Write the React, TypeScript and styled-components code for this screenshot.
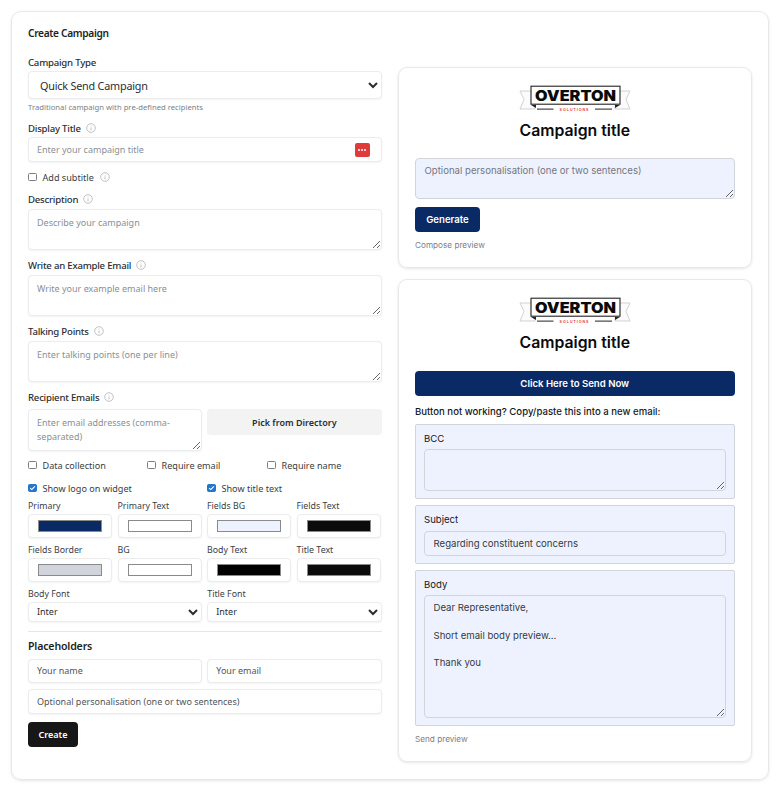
import React from 'react';
import styled, { createGlobalStyle } from 'styled-components';

const GlobalStyle = createGlobalStyle`
  html, body {
    margin: 0;
    padding: 0;
    background: #ffffff;
  }
  * {
    box-sizing: border-box;
  }
  body {
    font-family: 'Noto Sans', sans-serif;
    color: #1f2328;
  }
`;

const Page = styled.div`
  width: 781px;
  height: 788px;
  padding: 11px 12px 8px 11px;
`;

const Shell = styled.main`
  height: 769px;
  border: 1px solid #e8e8e8;
  border-radius: 10px;
  box-shadow: 0 1px 3px rgba(0, 0, 0, 0.1);
  padding: 14px 16px 16px;
  display: grid;
  grid-template-columns: 353.5px 353.5px;
  column-gap: 16.5px;
`;

const FormColumn = styled.form`
  display: flex;
  flex-direction: column;
`;

const PreviewColumn = styled.div`
  display: flex;
  flex-direction: column;
  gap: 11px;
  padding-top: 40.5px;
  font-family: Inter, sans-serif;
`;

const Heading = styled.h1`
  margin: 0 0 15px;
  font-size: 10.2px;
  letter-spacing: -0.33px;
  line-height: 14px;
  font-weight: 600;
  color: #1c1f23;
`;

const Label = styled.label<{ $gap?: number; $top?: number }>`
  display: flex;
  align-items: center;
  gap: 5px;
  height: 14px;
  margin-top: ${(p) => p.$top ?? 0}px;
  margin-bottom: ${(p) => p.$gap ?? 2}px;
  font-size: 9.6px;
  letter-spacing: -0.22px;
  font-weight: 500;
  color: #2a2e33;
`;

const Info = () => (
  <svg width="10" height="10" viewBox="0 0 10 10" fill="none" stroke="#a3a8ae" strokeWidth="0.7">
    <circle cx="5" cy="5" r="4.3" />
    <path d="M5 4.4V7.4M5 2.6V3.3" />
  </svg>
);

const BaseSelect = styled.select`
  width: 100%;
  background: #fff;
  border: 1px solid #ececec;
  border-radius: 4px;
  box-shadow: 0 1px 2px rgba(0, 0, 0, 0.05);
  color: #2a2e33;
  font-family: 'Noto Sans', sans-serif;
  outline: none;
`;

const TypeSelect = styled(BaseSelect)`
  height: 28px;
  padding: 0 0 0 7px;
  font-size: 10.8px;
  letter-spacing: -0.2px;
`;

const SmallSelect = styled(BaseSelect)`
  height: 19.5px;
  padding: 0 0 0 4px;
  font-size: 9px;
`;

const Hint = styled.p`
  margin: 3px 0 8px;
  font-size: 7.7px;
  line-height: 11px;
  color: #7a7f85;
`;

const fieldStyles = `
  width: 100%;
  display: block;
  background: #fff;
  border: 1px solid #ececec;
  border-radius: 4px;
  box-shadow: 0 1px 2px rgba(0, 0, 0, 0.05);
  padding: 0 8px;
  font-family: 'Noto Sans', sans-serif;
  font-size: 9px;
  color: #50555b;
  outline: none;
  &::placeholder {
    color: #8a8f95;
    opacity: 1;
  }
`;

const TextInput = styled.input<{ $h?: number }>`
  ${fieldStyles}
  height: ${(p) => p.$h ?? 25}px;
`;

const TextArea = styled.textarea<{ $h?: number }>`
  ${fieldStyles}
  height: ${(p) => p.$h ?? 41}px;
  padding: 6px 8px;
  line-height: 13.5px;
  resize: vertical;
`;

const InputWrap = styled.div<{ $top?: number }>`
  position: relative;
  margin-top: ${(p) => p.$top ?? 0}px;
`;

const PasswordBadge = styled.span`
  position: absolute;
  top: 6px;
  right: 12px;
  width: 15px;
  height: 14px;
  border-radius: 2px;
  background: #e03a3a;
  display: flex;
  align-items: center;
  justify-content: center;
  gap: 1px;
`;

const BadgeDot = styled.i`
  width: 2px;
  height: 2px;
  border-radius: 50%;
  background: #fff;
`;

const CheckLabel = styled.label<{ $top?: number; $bottom?: number }>`
  display: flex;
  align-items: center;
  gap: 6px;
  height: 14px;
  font-size: 9.1px;
  color: #3a3e43;
  margin-top: ${(p) => p.$top ?? 0}px;
  margin-bottom: ${(p) => p.$bottom ?? 0}px;
`;

const Check = styled.input.attrs({ type: 'checkbox' })`
  appearance: none;
  flex: none;
  width: 8.5px;
  height: 8.5px;
  margin: 0;
  background: #fff;
  border: 1px solid #7d7d7d;
  border-radius: 1.5px;
  &:checked {
    border-color: #2277cc;
    background: #2277cc url("data:image/svg+xml,%3Csvg xmlns='http://www.w3.org/2000/svg' viewBox='0 0 8 8'%3E%3Cpath d='M1.3 4.2 3.2 6 6.7 1.9' fill='none' stroke='white' stroke-width='1.3'/%3E%3C/svg%3E") center/100% no-repeat;
  }
`;

const Columns = styled.div<{ $top?: number }>`
  display: grid;
  grid-template-columns: 174.25px 174.25px;
  column-gap: 5px;
  align-items: start;
  margin-top: ${(p) => p.$top ?? 0}px;
`;

const DirectoryButton = styled.button`
  height: 26px;
  border: none;
  border-radius: 4px;
  background: #f3f3f3;
  color: #2a2e33;
  font-family: 'Noto Sans', sans-serif;
  font-size: 9px;
  font-weight: 600;
`;

const OptionRow = styled.div<{ $cols: string; $top: number }>`
  display: grid;
  grid-template-columns: ${(p) => p.$cols};
  margin-top: ${(p) => p.$top}px;
`;

const SwatchGrid = styled.div`
  display: grid;
  grid-template-columns: repeat(4, 84.25px);
  column-gap: 5.25px;
  row-gap: 6px;
  margin-top: 5px;
`;

const SwatchField = styled.div`
  display: flex;
  flex-direction: column;
  gap: 1px;
`;

const SwatchLabel = styled.span`
  height: 13px;
  font-size: 8.8px;
  line-height: 13px;
  color: #3a3e43;
`;

const SwatchBox = styled.div`
  height: 24px;
  background: #fff;
  border: 1px solid #ececec;
  border-radius: 4px;
  box-shadow: 0 1px 2px rgba(0, 0, 0, 0.05);
  display: flex;
  align-items: center;
  justify-content: center;
`;

const Swatch = styled.div<{ $color: string }>`
  width: 64px;
  height: 12px;
  background: ${(p) => p.$color};
  border: 1px solid #8a8a8a;
`;

const Rule = styled.hr`
  border: none;
  border-top: 1px solid #e6e6e6;
  margin: 9px 0 7px;
`;

const SubHeading = styled.h2`
  margin: 0 0 6px;
  font-size: 10.6px;
  letter-spacing: -0.17px;
  line-height: 14px;
  font-weight: 600;
  color: #1c1f23;
`;

const CreateButton = styled.button`
  width: 50px;
  height: 25px;
  margin-top: 8px;
  border: none;
  border-radius: 4px;
  background: #171717;
  color: #fff;
  font-family: 'Noto Sans', sans-serif;
  font-size: 9px;
  font-weight: 600;
`;

const PreviewCard = styled.section<{ $h: number }>`
  height: ${(p) => p.$h}px;
  border: 1px solid #e8e8e8;
  border-radius: 9px;
  box-shadow: 0 1px 3px rgba(0, 0, 0, 0.1);
  padding: 16px 16px 0;
  display: flex;
  flex-direction: column;
`;

const LogoRow = styled.div`
  display: flex;
  justify-content: center;
  height: 28px;
`;

const CampaignTitle = styled.h2`
  margin: 9px 0 17.5px;
  text-align: center;
  font-size: 15.8px;
  line-height: 20px;
  font-weight: 600;
  color: #0b0b0b;
`;

const PreviewArea = styled.textarea<{ $h: number }>`
  display: block;
  width: 100%;
  height: ${(p) => p.$h}px;
  background: #eef2ff;
  border: 1px solid #d1d5db;
  border-radius: 4px;
  padding: 5px 8.5px;
  font-family: Inter, sans-serif;
  font-size: 9.6px;
  line-height: 13.75px;
  color: #333a44;
  outline: none;
  resize: vertical;
  &::placeholder {
    color: #73777f;
    opacity: 1;
  }
`;

const PreviewInput = styled.input`
  display: block;
  width: 100%;
  height: 25px;
  background: #eef2ff;
  border: 1px solid #d1d5db;
  border-radius: 4px;
  padding: 0 8.5px;
  font-family: Inter, sans-serif;
  font-size: 9.6px;
  color: #333a44;
  outline: none;
`;

const PrimaryButton = styled.button<{ $wide?: boolean }>`
  width: ${(p) => (p.$wide ? '100%' : '65px')};
  height: 25px;
  border: none;
  border-radius: 4px;
  background: #0a2a66;
  color: #fff;
  font-family: Inter, sans-serif;
  font-size: 9.6px;
  font-weight: 600;
`;

const GenerateButton = styled(PrimaryButton)`
  margin-top: 8px;
`;

const Caption = styled.p`
  margin: 8px 0 0;
  font-size: 8.2px;
  line-height: 11px;
  color: #7c8086;
`;

const CopyNote = styled.p`
  margin: 9px 0 6px;
  font-size: 9.6px;
  line-height: 13px;
  font-weight: 500;
  color: #16181b;
`;

const CopyStack = styled.div`
  display: flex;
  flex-direction: column;
  gap: 6px;
`;

const CopyBlock = styled.div`
  background: #eef2ff;
  border: 1px solid #d1d5db;
  border-radius: 2px;
  padding: 7px 8px;
`;

const CopyLabel = styled.div`
  height: 13px;
  margin-bottom: 4.5px;
  font-size: 9.6px;
  line-height: 13px;
  color: #16181b;
`;

const Logo = () => (
  <svg width="112" height="28" viewBox="0 0 112 28">
    <path d="M14 7H1L5 15.5L1 25H16V21Z" fill="#fbfbfb" stroke="#c8c8c8" strokeWidth="0.8" />
    <path d="M98 7H111L107 15.5L111 25H96V21Z" fill="#fbfbfb" stroke="#c8c8c8" strokeWidth="0.8" />
    <path d="M12 21H17V24Z" fill="#222" />
    <path d="M101 21H96V24Z" fill="#222" />
    <rect x="12" y="2.2" width="89" height="18" fill="#fff" stroke="#222" strokeWidth="1.1" />
    <text
      x="56.5"
      y="16.6"
      textAnchor="middle"
      fontFamily="Inter, sans-serif"
      fontWeight="900"
      fontSize="14"
      fill="#0b0b0b"
      textLength="81"
      lengthAdjust="spacingAndGlyphs"
    >
      OVERTON
    </text>
    <rect x="18" y="24.6" width="16.5" height="1" fill="#222" />
    <rect x="76" y="24.6" width="17" height="1" fill="#222" />
    <text
      x="55.5"
      y="26.8"
      textAnchor="middle"
      fontFamily="'Liberation Sans', sans-serif"
      fontWeight="700"
      fontSize="3.6"
      letterSpacing="1"
      fill="#e03a3a"
    >
      SOLUTIONS
    </text>
  </svg>
);

const swatches = [
  { label: 'Primary', color: '#0a2a66' },
  { label: 'Primary Text', color: '#ffffff' },
  { label: 'Fields BG', color: '#eef2ff' },
  { label: 'Fields Text', color: '#0b0b0b' },
  { label: 'Fields Border', color: '#d1d5db' },
  { label: 'BG', color: '#ffffff' },
  { label: 'Body Text', color: '#000000' },
  { label: 'Title Text', color: '#0b0b0b' },
];

export default function App() {
  return (
    <Page>
      <GlobalStyle />
      <Shell>
        <FormColumn>
          <Heading>Create Campaign</Heading>

          <Label>Campaign Type</Label>
          <TypeSelect defaultValue="quick">
            <option value="quick">Quick Send Campaign</option>
          </TypeSelect>
          <Hint>Traditional campaign with pre-defined recipients</Hint>

          <Label>
            Display Title <Info />
          </Label>
          <InputWrap>
            <TextInput placeholder="Enter your campaign title" />
            <PasswordBadge>
              <BadgeDot />
              <BadgeDot />
              <BadgeDot />
            </PasswordBadge>
          </InputWrap>

          <CheckLabel $top={8} $bottom={8}>
            <Check />
            Add subtitle <Info />
          </CheckLabel>

          <Label $gap={3}>
            Description <Info />
          </Label>
          <TextArea placeholder="Describe your campaign" />

          <Label $top={8} $gap={3}>
            Write an Example Email <Info />
          </Label>
          <TextArea placeholder="Write your example email here" />

          <Label $top={8} $gap={3}>
            Talking Points <Info />
          </Label>
          <TextArea placeholder="Enter talking points (one per line)" />

          <Label $top={8} $gap={5}>
            Recipient Emails <Info />
          </Label>
          <Columns>
            <TextArea $h={42} placeholder="Enter email addresses (comma-separated)" />
            <DirectoryButton type="button">Pick from Directory</DirectoryButton>
          </Columns>

          <OptionRow $cols="119px 120px 1fr" $top={7}>
            <CheckLabel>
              <Check />
              Data collection
            </CheckLabel>
            <CheckLabel>
              <Check />
              Require email
            </CheckLabel>
            <CheckLabel>
              <Check />
              Require name
            </CheckLabel>
          </OptionRow>
          <OptionRow $cols="179px 1fr" $top={9}>
            <CheckLabel>
              <Check defaultChecked />
              Show logo on widget
            </CheckLabel>
            <CheckLabel>
              <Check defaultChecked />
              Show title text
            </CheckLabel>
          </OptionRow>

          <SwatchGrid>
            {swatches.map((s) => (
              <SwatchField key={s.label}>
                <SwatchLabel>{s.label}</SwatchLabel>
                <SwatchBox>
                  <Swatch $color={s.color} />
                </SwatchBox>
              </SwatchField>
            ))}
          </SwatchGrid>

          <Columns $top={6}>
            <SwatchField>
              <SwatchLabel>Body Font</SwatchLabel>
              <SmallSelect defaultValue="inter">
                <option value="inter">Inter</option>
              </SmallSelect>
            </SwatchField>
            <SwatchField>
              <SwatchLabel>Title Font</SwatchLabel>
              <SmallSelect defaultValue="inter">
                <option value="inter">Inter</option>
              </SmallSelect>
            </SwatchField>
          </Columns>

          <Rule />
          <SubHeading>Placeholders</SubHeading>
          <Columns>
            <TextInput $h={24} defaultValue="Your name" />
            <TextInput $h={24} defaultValue="Your email" />
          </Columns>
          <InputWrap $top={6}>
            <TextInput defaultValue="Optional personalisation (one or two sentences)" />
          </InputWrap>
          <CreateButton type="button">Create</CreateButton>
        </FormColumn>

        <PreviewColumn>
          <PreviewCard $h={201.5}>
            <LogoRow>
              <Logo />
            </LogoRow>
            <CampaignTitle>Campaign title</CampaignTitle>
            <PreviewArea $h={41} placeholder="Optional personalisation (one or two sentences)" />
            <GenerateButton>Generate</GenerateButton>
            <Caption>Compose preview</Caption>
          </PreviewCard>

          <PreviewCard $h={483}>
            <LogoRow>
              <Logo />
            </LogoRow>
            <CampaignTitle>Campaign title</CampaignTitle>
            <PrimaryButton $wide>Click Here to Send Now</PrimaryButton>
            <CopyNote>Button not working? Copy/paste this into a new email:</CopyNote>
            <CopyStack>
              <CopyBlock>
                <CopyLabel>BCC</CopyLabel>
                <PreviewArea $h={42} />
              </CopyBlock>
              <CopyBlock>
                <CopyLabel>Subject</CopyLabel>
                <PreviewInput defaultValue="Regarding constituent concerns" />
              </CopyBlock>
              <CopyBlock>
                <CopyLabel>Body</CopyLabel>
                <PreviewArea
                  $h={123}
                  defaultValue={'Dear Representative,\n\nShort email body preview...\n\nThank you'}
                />
              </CopyBlock>
            </CopyStack>
            <Caption>Send preview</Caption>
          </PreviewCard>
        </PreviewColumn>
      </Shell>
    </Page>
  );
}
